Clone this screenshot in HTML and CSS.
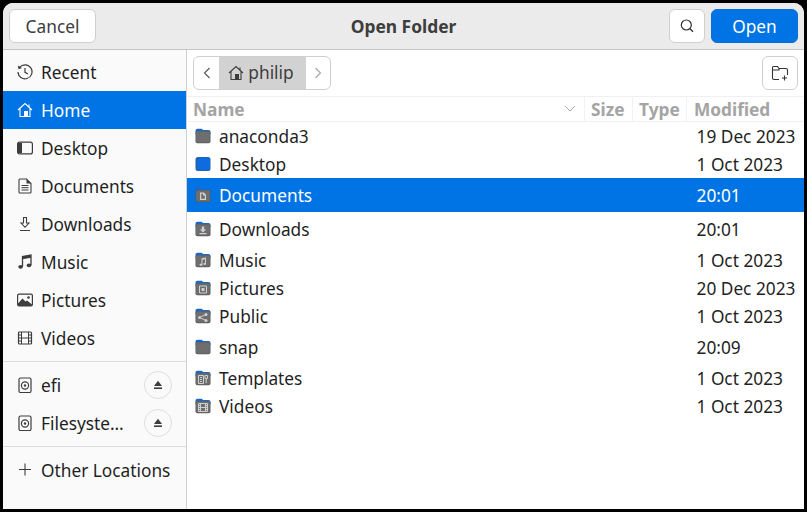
FILE: index.html
```html
<!DOCTYPE html>
<html lang="en">
<head>
<meta charset="utf-8">
<title>Open Folder</title>
<link rel="stylesheet" href="styles.css">
</head>
<body>
<svg class="defs" width="0" height="0" aria-hidden="true">
  <defs>
    <symbol id="folder" viewBox="0 0 16 16">
      <path d="M.5 3C.5 1.700 1.300 .8 2.500 .8h4l1.800 1.200H13.500c1.200 0 2 .8 2 2V6H.5z" fill="#1a68c9"/>
      <rect x=".5" y="2.900" width="15" height="12.300" rx="2" fill="#555a60"/>
      <path d="M1.200 4.600c0-.8.500-1.200 1.200-1.200H13.600c.8 0 1.200.4 1.200 1.200V13.200c0 .8-.4 1.200-1.200 1.200H2.400c-.7 0-1.200-.4-1.200-1.200z" fill="#6e6e6e"/>
    </symbol>
    <symbol id="home" viewBox="0 0 16 16">
      <path d="M1 8 8 1.500 15 8M3 6.500V14.500H13V6.500M12 2.500V5" fill="none" stroke="currentColor" stroke-width="1.100"/>
      <rect x="7" y="9" width="4" height="5.500" fill="currentColor"/>
    </symbol>
  </defs>
</svg>
<div class="window">
  <header class="titlebar">
    <button class="btn btn-cancel"><span class="lbl">Cancel</span></button>
    <h1 class="title">Open Folder</h1>
    <div class="actions">
      <button class="btn btn-search" aria-label="Search">
        <svg class="ico" viewBox="0 0 16 16"><circle cx="7.300" cy="7" r="5" fill="none" stroke="#333" stroke-width="1.200"/><path d="m11 10.800 3 3" stroke="#333" stroke-width="1.400"/></svg>
      </button>
      <button class="btn btn-open"><span class="lbl">Open</span></button>
    </div>
  </header>
  <div class="body">
    <nav class="sidebar">
      <ul class="places">
        <li class="place">
          <svg class="ico" viewBox="0 0 16 16"><path d="M2.600 3.400A7 7 0 1 1 1 8" fill="none" stroke="#3d3d3d" stroke-width="1.200"/><path d="M.8 1.500 1.500 5.300 5 4z" fill="#3d3d3d"/><path d="M8 4v4.300l3 1.700" fill="none" stroke="#3d3d3d" stroke-width="1.200"/></svg>
          <span class="txt">Recent</span>
        </li>
        <li class="place place-active">
          <svg class="ico"><use href="#home"/></svg>
          <span class="txt">Home</span>
        </li>
        <li class="place">
          <svg class="ico" viewBox="0 0 16 16"><rect x=".6" y="2.100" width="14.800" height="11.800" rx="2" fill="none" stroke="#3d3d3d" stroke-width="1.200"/><path d="M1 3h4v10H1z" fill="#3d3d3d"/></svg>
          <span class="txt">Desktop</span>
        </li>
        <li class="place">
          <svg class="ico" viewBox="0 0 16 16"><path d="M2 2c0-.6.4-1 1-1h6.500L14 5.500V14c0 .6-.4 1-1 1H3c-.6 0-1-.4-1-1z" fill="none" stroke="#3d3d3d" stroke-width="1.100"/><path d="M9.500 1v4.500H14z" fill="#3d3d3d"/><path d="M4.500 7.500h7M4.500 9.700h7M4.500 12h7" stroke="#3d3d3d"/></svg>
          <span class="txt">Documents</span>
        </li>
        <li class="place">
          <svg class="ico" viewBox="0 0 16 16"><path d="M6.500 1.500h3V7H12L8 11.300 4 7h2.500zM3 14.500h10" fill="none" stroke="#3d3d3d" stroke-width="1.100"/></svg>
          <span class="txt">Downloads</span>
        </li>
        <li class="place">
          <svg class="ico" viewBox="0 0 16 16"><path d="M5.500 12.500V2.500L14 1v10" fill="none" stroke="#3d3d3d" stroke-width="1.300"/><path d="M5.500 2.500 14 1v2.800L5.500 5.300z" fill="#3d3d3d"/><ellipse cx="3.600" cy="12.800" rx="2.300" ry="1.900" fill="#3d3d3d"/><ellipse cx="12" cy="11.300" rx="2.300" ry="1.900" fill="#3d3d3d"/></svg>
          <span class="txt">Music</span>
        </li>
        <li class="place">
          <svg class="ico" viewBox="0 0 16 16"><rect x=".6" y="2.100" width="14.800" height="11.800" rx="1.500" fill="none" stroke="#3d3d3d" stroke-width="1.200"/><path d="M1 13V11.500L5.500 6.500 8.500 9.500 10 8.500 15 12.500V14H1z" fill="#3d3d3d"/><circle cx="11.500" cy="5.500" r="1.300" fill="#3d3d3d"/></svg>
          <span class="txt">Pictures</span>
        </li>
        <li class="place">
          <svg class="ico" viewBox="0 0 16 16"><rect x="1.500" y="2" width="13" height="12" rx="1" fill="none" stroke="#3d3d3d" stroke-width="1.200"/><path d="M4.500 2v12M11.500 2v12M1.500 8h13M1.500 5h3M1.500 11h3M11.500 5h3M11.500 11h3" stroke="#3d3d3d" fill="none"/></svg>
          <span class="txt">Videos</span>
        </li>
      </ul>
      <ul class="places places-split">
        <li class="place place-mount">
          <svg class="ico" viewBox="0 0 16 16"><rect x="2" y="1" width="12" height="14.500" rx="1.500" fill="none" stroke="#3d3d3d" stroke-width="1.200"/><circle cx="8" cy="8.500" r="3.600" fill="none" stroke="#3d3d3d" stroke-width="1.200"/><circle cx="8" cy="8.500" r="1.200" fill="#3d3d3d"/></svg>
          <span class="txt">efi</span>
          <button class="eject" aria-label="Eject"><svg class="ico-s" viewBox="0 0 10 10"><path d="M5 .8 9 6H1z" fill="#3d3d3d"/><rect x="1" y="7.400" width="8" height="1.600" fill="#3d3d3d"/></svg></button>
        </li>
        <li class="place place-mount">
          <svg class="ico" viewBox="0 0 16 16"><rect x="2" y="1" width="12" height="14.500" rx="1.500" fill="none" stroke="#3d3d3d" stroke-width="1.200"/><circle cx="8" cy="8.500" r="3.600" fill="none" stroke="#3d3d3d" stroke-width="1.200"/><circle cx="8" cy="8.500" r="1.200" fill="#3d3d3d"/></svg>
          <span class="txt">Filesyste…</span>
          <button class="eject" aria-label="Eject"><svg class="ico-s" viewBox="0 0 10 10"><path d="M5 .8 9 6H1z" fill="#3d3d3d"/><rect x="1" y="7.400" width="8" height="1.600" fill="#3d3d3d"/></svg></button>
        </li>
      </ul>
      <ul class="places places-split">
        <li class="place">
          <svg class="ico" viewBox="0 0 16 16"><path d="M8 1.500v12M2 7.500h12" stroke="#3d3d3d" stroke-width="1.100"/></svg>
          <span class="txt">Other Locations</span>
        </li>
      </ul>
    </nav>
    <main class="browser">
      <div class="toolbar">
        <div class="path">
          <button class="path-btn path-prev" aria-label="Back"><svg class="ico-c" viewBox="0 0 10 16"><path d="M7.500 3 2.500 8l5 5" fill="none" stroke="#555" stroke-width="1.100"/></svg></button>
          <button class="path-btn path-current"><svg class="ico-h"><use href="#home"/></svg><span class="crumb">philip</span></button>
          <button class="path-btn path-next" aria-label="Forward"><svg class="ico-c" viewBox="0 0 10 16"><path d="M2.500 3l5 5-5 5" fill="none" stroke="#a5a5a5" stroke-width="1.100"/></svg></button>
        </div>
        <button class="btn btn-new" aria-label="New folder"><svg class="ico-n" viewBox="0 0 18 16"><path d="M8 14.500H3c-1 0-1.500-.6-1.500-1.500V2.500c0-.6.400-1 1-1h4l1.500 2h7c1 0 1.500.5 1.500 1.500v5M1.500 5h6.500L8 3.500" fill="none" stroke="#333" stroke-width="1.100"/><path d="M13.500 10.500v5M11 13h5" stroke="#333" stroke-width="1.100"/></svg></button>
      </div>
      <div class="list-head">
        <div class="col col-name"><span>Name</span><svg class="ico-sort" viewBox="0 0 12 8"><path d="m1 1 5 5 5-5" fill="none" stroke="#aaa"/></svg></div>
        <div class="col col-size">Size</div>
        <div class="col col-type">Type</div>
        <div class="col col-mod">Modified</div>
      </div>
      <div class="rows">
        <div class="row"><svg class="fi"><use href="#folder"/></svg><span class="fname txt">anaconda3</span><span class="fdate txt">19 Dec 2023</span></div>
        <div class="row"><svg class="fi" viewBox="0 0 16 16"><rect x=".5" y="1" width="15" height="14" rx="2.500" fill="#2a5f9e"/><rect x="2" y="1.800" width="13" height="12.400" rx="1.500" fill="#0f6ce0"/></svg><span class="fname txt">Desktop</span><span class="fdate txt">1 Oct 2023</span></div>
        <div class="row row-tall row-sel"><svg class="fi"><use href="#folder"/><path class="glyph" d="M5 5.500h3.800L11 7.700v5.300H5zM6.200 6.700v5.100h3.600V8.500H8V6.700z"/></svg><span class="fname txt">Documents</span><span class="fdate txt">20:01</span></div>
        <div class="row row-tall"><svg class="fi"><use href="#folder"/><path class="glyph" d="M6.800 5.500h2.400v3h2L8 11.400 4.800 8.500h2zM4.500 12h7v1.200h-7z"/></svg><span class="fname txt">Downloads</span><span class="fdate txt">20:01</span></div>
        <div class="row"><svg class="fi"><use href="#folder"/><path class="glyph" d="M6.500 6.300 11 5.500v6.300c0 .8-.6 1.200-1.300 1.200s-1.200-.4-1.200-1.100.6-1.100 1.500-1V7.200l-2.500.5v5c0 .8-.6 1.200-1.300 1.200S4.500 13.500 4.500 12.800s.6-1.100 2-1z"/></svg><span class="fname txt">Music</span><span class="fdate txt">1 Oct 2023</span></div>
        <div class="row"><svg class="fi"><use href="#folder"/><path class="glyph-line" d="M4.500 6h7v7h-7z"/><rect class="glyph" x="6.500" y="8" width="3" height="3"/></svg><span class="fname txt">Pictures</span><span class="fdate txt">20 Dec 2023</span></div>
        <div class="row"><svg class="fi"><use href="#folder"/><path class="glyph-line" d="M4.500 9.500 11 6.500M4.500 9.500l6.500 3"/><circle class="glyph" cx="4.500" cy="9.500" r="1.500"/><circle class="glyph" cx="11" cy="6.500" r="1.500"/><circle class="glyph" cx="11" cy="12.500" r="1.500"/></svg><span class="fname txt">Public</span><span class="fdate txt">1 Oct 2023</span></div>
        <div class="row row-tall"><svg class="fi"><use href="#folder"/></svg><span class="fname txt">snap</span><span class="fdate txt">20:09</span></div>
        <div class="row"><svg class="fi"><use href="#folder"/><path class="glyph-line" d="M3.500 5.500h5v8h-5zM5 7.500h2M5 9.500h2M5 11.500h2M10 5.500h2.500v3H10zM11.200 8.500v4.500"/></svg><span class="fname txt">Templates</span><span class="fdate txt">1 Oct 2023</span></div>
        <div class="row"><svg class="fi"><use href="#folder"/><path class="glyph-line" d="M3.500 5.500h9v8h-9zM5.500 5.500v8M10.500 5.500v8M3.500 9.500h9M3.500 7.500h2M3.500 11.500h2M10.500 7.500h2M10.500 11.500h2"/></svg><span class="fname txt">Videos</span><span class="fdate txt">1 Oct 2023</span></div>
      </div>
    </main>
  </div>
</div>
</body>
</html>
```
FILE: styles.css
```css
* { box-sizing: border-box; }
html, body { margin: 0; height: 100%; }
body {
  background: #000;
  padding: 3px;
  font-family: "Noto Sans", "Open Sans", sans-serif;
  font-size: 17.3px;
  color: #1f1f1f;
  overflow: hidden;
}
.defs { position: absolute; }
ul { list-style: none; margin: 0; padding: 0; }
button { font: inherit; color: inherit; }
.crumb { padding-bottom: 1px; }
.lbl { padding-top: 2px; }
.window {
  height: 506px;
  display: flex;
  flex-direction: column;
  background: #fafafa;
  border-radius: 10px 10px 0 0;
  overflow: hidden;
}
.titlebar {
  height: 47px;
  flex: none;
  display: flex;
  align-items: center;
  justify-content: space-between;
  position: relative;
  padding: 6px 6px 7px;
  background: #ebebeb;
  border-bottom: 1px solid #c4c4c4;
}
.title {
  position: absolute;
  left: 0;
  right: 0;
  margin: 0;
  text-align: center;
  font-size: 17.4px;
  font-weight: 700;
  color: #3d3d3d;
  pointer-events: none;
}
.btn {
  height: 34px;
  padding: 0;
  display: inline-flex;
  align-items: center;
  justify-content: center;
  background: #fff;
  border: 1px solid #cfcfcf;
  border-radius: 6px;
  color: #3d3d3d;
}
.btn-cancel { width: 87px; }
.actions { display: flex; gap: 6px; }
.btn-search { width: 36px; }
.btn-open { width: 87px; background: #0073e5; border-color: #0a6fd6; color: #fff; }
.ico { width: 16px; height: 16px; flex: none; }
.body { flex: 1; min-height: 0; display: flex; }
.sidebar {
  width: 184px;
  flex: none;
  padding-top: 3px;
  background: #fafafa;
  border-right: 1px solid #d0d0d0;
}
.places-split { margin-top: 4px; padding-top: 4px; border-top: 1px solid #dcdcdc; }
.place {
  height: 38px;
  display: flex;
  align-items: center;
  padding-left: 14px;
  gap: 8px;
  color: #1f1f1f;
  white-space: nowrap;
}
.place-active { background: #0073e5; color: #fff; }
.place-mount { padding-right: 14px; }
.place-mount .txt { flex: 1; }
.eject {
  width: 28px;
  height: 28px;
  padding: 0;
  display: flex;
  align-items: center;
  justify-content: center;
  background: transparent;
  border: 1px solid #dfdfdf;
  border-radius: 50%;
}
.ico-s { width: 10px; height: 10px; }
.browser { flex: 1; min-width: 0; display: flex; flex-direction: column; background: #fff; }
.toolbar {
  height: 47px;
  flex: none;
  display: flex;
  align-items: flex-start;
  justify-content: space-between;
  padding: 6px 6px 0;
  border-bottom: 1px solid #f0f0f0;
}
.path {
  height: 34px;
  display: flex;
  border: 1px solid #cfcfcf;
  border-radius: 6px;
  overflow: hidden;
  background: #fff;
}
.path-btn {
  padding: 0;
  border: 0;
  background: transparent;
  display: flex;
  align-items: center;
  justify-content: center;
  color: #3d3d3d;
}
.path-prev { width: 25px; }
.path-next { width: 24px; }
.path-current { width: 87px; gap: 4px; background: #d2d2d2; padding-right: 3px; }
.ico-c { width: 10px; height: 16px; }
.ico-h { width: 16px; height: 16px; }
.btn-new { width: 36px; }
.ico-n { width: 18px; height: 16px; }
.list-head {
  height: 25px;
  flex: none;
  display: flex;
  font-weight: 700;
  color: #a4a4a4;
  border-bottom: 1px solid #f0f0f0;
  line-height: 25px;
}
.col { padding-left: 6px; border-right: 1px solid #f2f2f2; }
.col-name { width: 398px; display: flex; align-items: center; justify-content: space-between; padding-right: 8px; }
.col-size { width: 48px; }
.col-type { width: 54px; }
.col-mod { flex: 1; border-right: 0; padding-left: 7px; }
.ico-sort { width: 12px; height: 8px; }
.rows { flex: 1; }
.row {
  height: 28px;
  display: flex;
  align-items: center;
  padding-left: 8px;
  color: #1f1f1f;
}
.row-tall { height: 34px; }
.row-sel { background: #0073e5; color: #fff; }
.fi { width: 16px; height: 16px; flex: none; }
.fname { width: 485.500px; padding-left: 8px; }
.fdate { white-space: nowrap; }
.glyph { fill: #d0d0d0; fill-rule: evenodd; }
.glyph-line { fill: none; stroke: #d0d0d0; stroke-width: 1; }
```
